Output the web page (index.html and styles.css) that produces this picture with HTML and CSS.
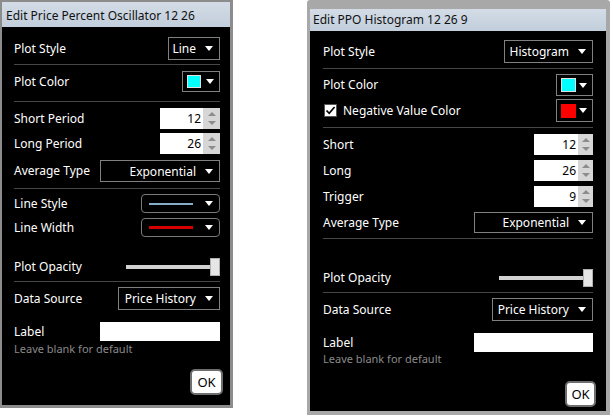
FILE: index.html
```html
<!DOCTYPE html>
<html>
<head>
  <title>Edit Indicator Dialogs</title>
  <link rel="stylesheet" href="styles.css">
</head>
<body>
  <div class="dialog dialog-ppo">
    <div class="title-bar">Edit Price Percent Oscillator 12 26</div>
    <div class="dialog-body">
      <div class="row">
        <span class="label">Plot Style</span>
        <div class="dropdown w52"><span>Line</span><i class="arrow"></i></div>
      </div>
      <div class="sep mt4"></div>
      <div class="row mt6">
        <span class="label">Plot Color</span>
        <div class="color-pick w38"><i class="swatch cyan"></i><i class="arrow"></i></div>
      </div>
      <div class="sep mt9"></div>
      <div class="row mt6">
        <span class="label">Short Period</span>
        <div class="spinner"><span class="spin-value">12</span><span class="spin-buttons"><i class="up"></i><i class="down"></i></span></div>
      </div>
      <div class="row mt4">
        <span class="label">Long Period</span>
        <div class="spinner"><span class="spin-value">26</span><span class="spin-buttons"><i class="up"></i><i class="down"></i></span></div>
      </div>
      <div class="row mt6">
        <span class="label">Average Type</span>
        <div class="dropdown w120 h22"><span>Exponential</span><i class="arrow"></i></div>
      </div>
      <div class="sep mt6"></div>
      <div class="row mt5">
        <span class="label">Line Style</span>
        <div class="line-pick"><i class="line-sample blue"></i><i class="arrow"></i></div>
      </div>
      <div class="row mt5">
        <span class="label">Line Width</span>
        <div class="line-pick"><i class="line-sample red"></i><i class="arrow"></i></div>
      </div>
      <div class="row mt21">
        <span class="label">Plot Opacity</span>
        <div class="slider"><i class="track"></i><i class="thumb"></i></div>
      </div>
      <div class="sep mt5"></div>
      <div class="row mt5">
        <span class="label">Data Source</span>
        <div class="dropdown w102"><span>Price History</span><i class="arrow"></i></div>
      </div>
      <div class="row mt12">
        <span class="label">Label</span>
        <div class="text-input w120"></div>
      </div>
      <div class="hint mt1">Leave blank for default</div>
      <div class="button-row mt13">
        <button class="ok-button w33">OK</button>
      </div>
    </div>
  </div>

  <div class="dialog dialog-hist">
    <div class="title-bar">Edit PPO Histogram 12 26 9</div>
    <div class="dialog-body">
      <div class="row">
        <span class="label">Plot Style</span>
        <div class="dropdown w89"><span>Histogram</span><i class="arrow"></i></div>
      </div>
      <div class="sep mt5"></div>
      <div class="row mt5">
        <span class="label">Plot Color</span>
        <div class="color-pick w37 h22"><i class="swatch cyan"></i><i class="arrow"></i></div>
      </div>
      <div class="row mt3">
        <label class="check-label">
          <i class="checkbox">
            <svg width="11" height="11" viewBox="0 0 11 11"><path d="M1.5 5.5 L4.2 8.3 L9.6 2" fill="none" stroke="#000" stroke-width="1.7"/></svg>
          </i>
          <span class="label">Negative Value Color</span>
        </label>
        <div class="color-pick w37 h23"><i class="swatch red"></i><i class="arrow"></i></div>
      </div>
      <div class="sep mt5"></div>
      <div class="row mt6">
        <span class="label">Short</span>
        <div class="spinner narrow"><span class="spin-value">12</span><span class="spin-buttons"><i class="up"></i><i class="down"></i></span></div>
      </div>
      <div class="row mt5">
        <span class="label">Long</span>
        <div class="spinner narrow"><span class="spin-value">26</span><span class="spin-buttons"><i class="up"></i><i class="down"></i></span></div>
      </div>
      <div class="row mt5">
        <span class="label">Trigger</span>
        <div class="spinner narrow"><span class="spin-value">9</span><span class="spin-buttons"><i class="up"></i><i class="down"></i></span></div>
      </div>
      <div class="row mt5">
        <span class="label">Average Type</span>
        <div class="dropdown w119 h21"><span>Exponential</span><i class="arrow"></i></div>
      </div>
      <div class="sep mt5"></div>
      <div class="row mt30">
        <span class="label">Plot Opacity</span>
        <div class="slider"><i class="track"></i><i class="thumb"></i></div>
      </div>
      <div class="sep mt5"></div>
      <div class="row mt5">
        <span class="label">Data Source</span>
        <div class="dropdown w101"><span>Price History</span><i class="arrow"></i></div>
      </div>
      <div class="row mt12">
        <span class="label">Label</span>
        <div class="text-input w119"></div>
      </div>
      <div class="hint">Leave blank for default</div>
      <div class="button-row mt15">
        <button class="ok-button w31">OK</button>
      </div>
    </div>
  </div>
</body>
</html>
```

FILE: styles.css
```css
body {
  margin: 0;
  background-color: #fff;
  display: flex;
  align-items: flex-start;
  font-family: "Noto Sans", "Open Sans", sans-serif;
  font-size: 12px;
}

.dialog {
  border: 3px solid #8c8c8c;
}

.dialog-ppo {
  width: 228px;
  border-top-width: 2px;
  border-left-width: 2px;
}

.dialog-hist {
  width: 296px;
  margin-left: 74px;
  border-color: #a8a8a8;
  border-top-width: 9px;
  border-right-width: 4px;
  border-bottom-width: 4px;
  border-top-left-radius: 3px;
  border-top-right-radius: 3px;
}

.title-bar {
  background: linear-gradient(#d3dce6, #c2cedb);
  color: #111;
  line-height: 16px;
  white-space: nowrap;
}

.dialog-ppo .title-bar {
  height: 25px;
  box-sizing: border-box;
  padding: 6px 0 0 4px;
}

.dialog-hist .title-bar {
  height: 22px;
  box-sizing: border-box;
  padding: 3px 0 0 3px;
}

.dialog-body {
  background-color: #000;
  color: #fff;
}

.dialog-ppo .dialog-body {
  padding: 10px 10px 10px 12px;
}

.dialog-hist .dialog-body {
  padding: 9px 13px 4px 13px;
}

.row {
  display: flex;
  align-items: center;
  justify-content: space-between;
}

.label {
  line-height: 16px;
  white-space: nowrap;
}

.sep {
  height: 1px;
  background-color: #474747;
}

.mt1 { margin-top: 1px; }
.mt3 { margin-top: 3px; }
.mt4 { margin-top: 4px; }
.mt5 { margin-top: 5px; }
.mt6 { margin-top: 6px; }
.mt9 { margin-top: 9px; }
.mt12 { margin-top: 12px; }
.mt13 { margin-top: 13px; }
.mt15 { margin-top: 15px; }
.mt21 { margin-top: 21px; }
.mt30 { margin-top: 30px; }

/* drop down boxes */
.dropdown {
  height: 23px;
  box-sizing: border-box;
  border: 1px solid #808080;
  display: flex;
  align-items: center;
  justify-content: flex-end;
  gap: 9px;
  padding-right: 6px;
  white-space: nowrap;
}

.w52 { width: 52px; }
.w89 { width: 89px; }
.w101 { width: 101px; }
.w102 { width: 102px; }
.w119 { width: 119px; }
.w120 { width: 120px; }
.w37 { width: 37px; }
.w38 { width: 38px; }

.arrow {
  width: 0;
  height: 0;
  border-left: 4px solid transparent;
  border-right: 4px solid transparent;
  border-top: 5px solid #fff;
}

/* colour pickers */
.color-pick {
  height: 21px;
  box-sizing: border-box;
  border: 1px solid #808080;
  display: flex;
  align-items: center;
  justify-content: space-between;
  padding: 0 5px 0 4px;
}

.swatch {
  width: 12px;
  height: 11px;
  border: 1px solid #e0e0e0;
}

.dialog-hist .swatch {
  width: 13px;
  height: 12px;
}

.swatch.cyan { background-color: #00ffff; }
.swatch.red { background-color: #ff0000; border-color: #ff0000; }

/* numeric spinners */
.spinner {
  display: flex;
  height: 21px;
  width: 60px;
}

.spin-value {
  flex: 1;
  background-color: #fff;
  color: #000;
  text-align: right;
  line-height: 21px;
  padding-right: 2px;
}

.spin-buttons {
  width: 17px;
  background-color: #d6d6d6;
  display: flex;
  flex-direction: column;
  align-items: center;
  justify-content: space-around;
  padding: 2px 0;
  box-sizing: border-box;
}

.spinner.narrow { width: 59px; }
.spinner.narrow .spin-buttons { width: 15px; }

.spin-buttons .up,
.spin-buttons .down {
  width: 0;
  height: 0;
  border-left: 4px solid transparent;
  border-right: 4px solid transparent;
}

.spin-buttons .up { border-bottom: 4px solid #8c8c8c; }
.spin-buttons .down { border-top: 4px solid #8c8c8c; }

/* line style pickers */
.line-pick {
  width: 79px;
  height: 19px;
  box-sizing: border-box;
  border: 1px solid #7a7a7a;
  border-radius: 4px;
  display: flex;
  align-items: center;
  justify-content: space-between;
  padding: 0 6px 0 7px;
}

.line-sample {
  width: 44px;
}

.line-sample.blue {
  height: 2px;
  background-color: #86acc6;
}

.line-sample.red {
  height: 3px;
  background-color: #d40000;
}

/* opacity slider */
.slider {
  width: 94px;
  height: 18px;
  display: flex;
  align-items: center;
}

.slider .track {
  flex: 1;
  height: 4px;
  background-color: #d2d2d2;
}

.slider .thumb {
  width: 10px;
  height: 18px;
  box-sizing: border-box;
  background-color: #e6e6e6;
  border: 1px solid #b0b0b0;
}

.text-input {
  height: 19px;
  background-color: #fff;
}

.hint {
  color: #8a8a8a;
  font-size: 11px;
  line-height: 14px;
  white-space: nowrap;
}

.check-label {
  display: flex;
  align-items: center;
  gap: 6px;
  padding-left: 1px;
}

.checkbox {
  width: 13px;
  height: 13px;
  box-sizing: border-box;
  background-color: #fff;
  border: 1px solid #555;
  display: flex;
  align-items: center;
  justify-content: center;
}

.button-row {
  display: flex;
  justify-content: flex-end;
  margin-right: -3px;
}

.ok-button {
  height: 26px;
  box-sizing: border-box;
  background-color: #fff;
  border: 2px solid #6e6e6e;
  border-radius: 5px;
  font-family: "Noto Sans", "Open Sans", sans-serif;
  font-size: 13px;
  color: #000;
  padding: 0;
}

.w31 { width: 31px; }
.w33 { width: 33px; }

/* control heights, kept last so they win over the defaults above */
.h21 { height: 21px; }
.h22 { height: 22px; }
.h23 { height: 23px; }
```
